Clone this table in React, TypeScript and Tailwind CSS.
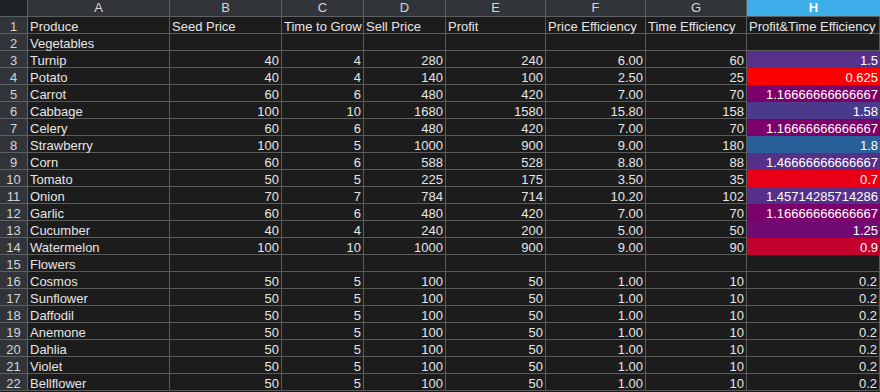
import React from "react";

const veg: [string, number, number, number, number, string, number, string, string][] = [
  ["Turnip", 40, 4, 280, 240, "6.00", 60, "1.5", "bg-[#55318b]"],
  ["Potato", 40, 4, 140, 100, "2.50", 25, "0.625", "bg-[#ff0000]"],
  ["Carrot", 60, 6, 480, 420, "7.00", 70, "1.16666666666667", "bg-[#7b0069]"],
  ["Cabbage", 100, 10, 1680, 1580, "15.80", 158, "1.58", "bg-[#4a3a8b]"],
  ["Celery", 60, 6, 480, 420, "7.00", 70, "1.16666666666667", "bg-[#7b0069]"],
  ["Strawberry", 100, 5, 1000, 900, "9.00", 180, "1.8", "bg-[#2a6099]"],
  ["Corn", 60, 6, 588, 528, "8.80", 88, "1.46666666666667", "bg-[#552f88]"],
  ["Tomato", 50, 5, 225, 175, "3.50", 35, "0.7", "bg-[#ea0016]"],
  ["Onion", 70, 7, 784, 714, "10.20", 102, "1.45714285714286", "bg-[#55308a]"],
  ["Garlic", 60, 6, 480, 420, "7.00", 70, "1.16666666666667", "bg-[#7b0069]"],
  ["Cucumber", 40, 4, 240, 200, "5.00", 50, "1.25", "bg-[#710a72]"],
  ["Watermelon", 100, 10, 1000, 900, "9.00", 90, "0.9", "bg-[#c2002e]"],
];

const flowers = ["Cosmos", "Sunflower", "Daffodil", "Anemone", "Dahlia", "Violet", "Bellflower"];

const cell = "h-[17px] pt-[1px] border-r border-b border-[#5b5b5b] bg-[#1c1c1c] text-[#e6e6e6] text-[13px] leading-[17px] whitespace-nowrap";
const num = cell + " text-right pr-[2px]";
const txt = cell + " pl-[2px]";
const rh = "h-[17px] pt-[1px] border-r border-b border-[#5e6164] bg-[#313438] text-[#d6d6d6] text-[13px] leading-[17px] text-center";

export default function App() {
  const rows: React.ReactNode[] = [];
  const header = ["Produce", "Seed Price", "Time to Grow", "Sell Price", "Profit", "Price Efficiency", "Time Efficiency", "Profit&Time Efficiency"];
  rows.push(
    <React.Fragment key="r1">
      <div className={rh}>1</div>
      {header.map((h) => (
        <div key={h} className={txt}>{h}</div>
      ))}
    </React.Fragment>
  );
  rows.push(
    <React.Fragment key="r2">
      <div className={rh}>2</div>
      <div className={txt}>Vegetables</div>
      {[0, 1, 2, 3, 4, 5, 6].map((i) => (
        <div key={i} className={cell}></div>
      ))}
    </React.Fragment>
  );
  veg.forEach((v, i) => {
    rows.push(
      <React.Fragment key={"v" + i}>
        <div className={rh}>{i + 3}</div>
        <div className={txt}>{v[0]}</div>
        <div className={num}>{v[1]}</div>
        <div className={num}>{v[2]}</div>
        <div className={num}>{v[3]}</div>
        <div className={num}>{v[4]}</div>
        <div className={num}>{v[5]}</div>
        <div className={num}>{v[6]}</div>
        <div className={"h-[17px] pt-[1px] text-right pr-[2px] text-[13px] leading-[17px] text-white whitespace-nowrap " + v[8]}>{v[7]}</div>
      </React.Fragment>
    );
  });
  rows.push(
    <React.Fragment key="r15">
      <div className={rh}>15</div>
      <div className={txt}>Flowers</div>
      {[0, 1, 2, 3, 4, 5, 6].map((i) => (
        <div key={i} className={cell}></div>
      ))}
    </React.Fragment>
  );
  flowers.forEach((f, i) => {
    rows.push(
      <React.Fragment key={"f" + i}>
        <div className={rh}>{i + 16}</div>
        <div className={txt}>{f}</div>
        <div className={num}>50</div>
        <div className={num}>5</div>
        <div className={num}>100</div>
        <div className={num}>50</div>
        <div className={num}>1.00</div>
        <div className={num}>10</div>
        <div className={num}>0.2</div>
      </React.Fragment>
    );
  });

  const cols = ["A", "B", "C", "D", "E", "F", "G"];
  return (
    <div className="w-[880px] h-[392px] overflow-hidden bg-[#1c1c1c]" style={{ fontFamily: '"Liberation Sans", Arial, sans-serif' }}>
      <div className="grid grid-cols-[28px_142px_112px_82px_82px_100px_100px_101px_133px]">
        <div className="h-[17px] border-r border-b border-[#5e6164] bg-[#1f2326]"></div>
        {cols.map((c) => (
          <div key={c} className="h-[17px] border-r border-b border-[#5e6164] bg-[#313438] text-[#d6d6d6] text-[13px] leading-[16px] text-center">{c}</div>
        ))}
        <div className="h-[17px] border-b border-[#5e6164] bg-[#3daee9] text-white font-bold text-[13px] leading-[16px] text-center">H</div>
        {rows}
      </div>
    </div>
  );
}
